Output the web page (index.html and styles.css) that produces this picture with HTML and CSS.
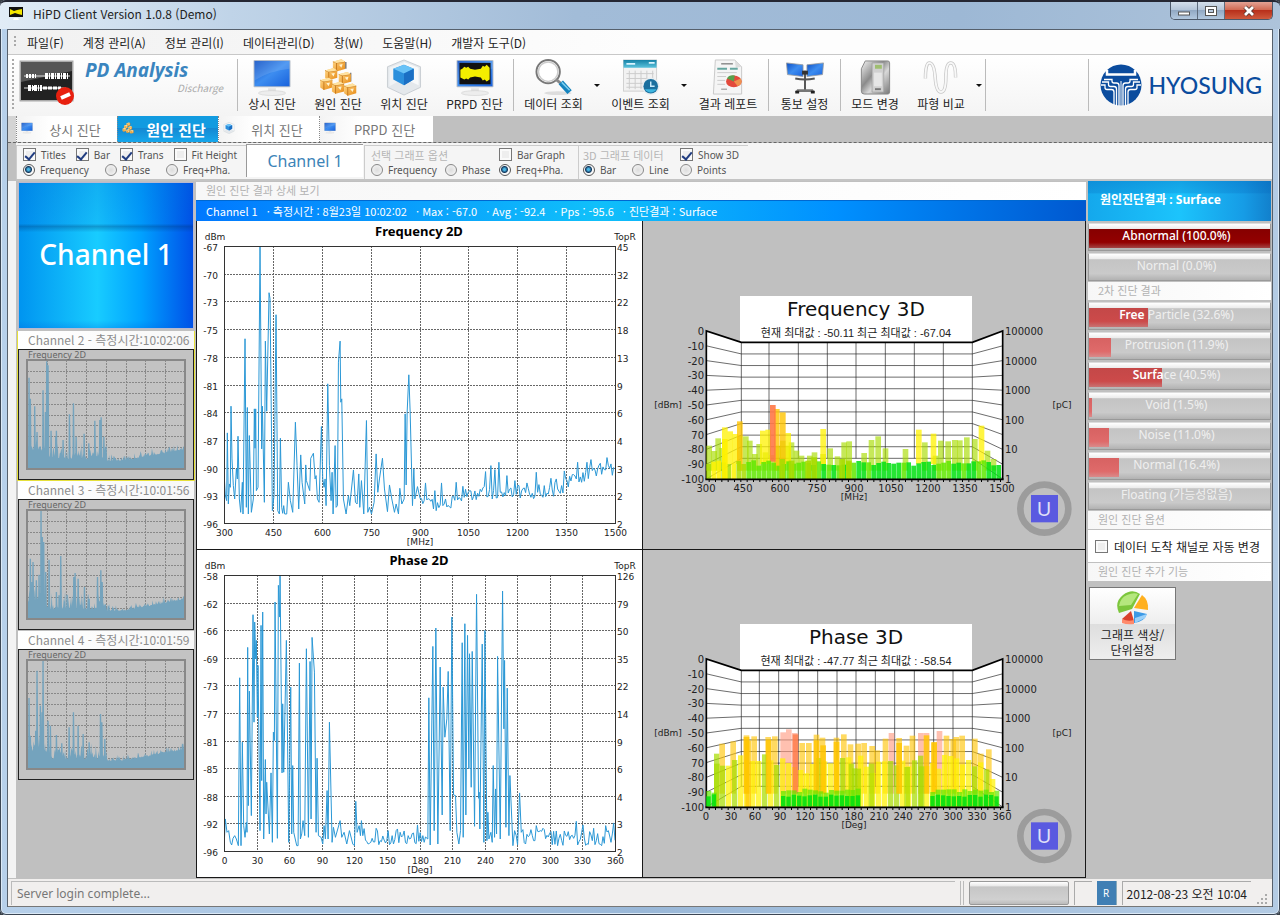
FILE: index.html
```html
<!DOCTYPE html>
<html lang="ko">
<head>
<meta charset="utf-8">
<title>HiPD Client Version 1.0.8 (Demo)</title>
<link rel="stylesheet" href="styles.css">
</head>
<body>
<svg class="defs" width="0" height="0" aria-hidden="true">
  <defs>
    <linearGradient id="gBlue" x1="0" y1="0" x2="1" y2="1"><stop offset="0" stop-color="#0d4fc4"/><stop offset=".5" stop-color="#3d8df0"/><stop offset="1" stop-color="#1a62dc"/></linearGradient>
    <linearGradient id="gSilver" x1="0" y1="0" x2="1" y2="1"><stop offset="0" stop-color="#f4f4f4"/><stop offset=".4" stop-color="#8b8b8b"/><stop offset=".6" stop-color="#d8d8d8"/><stop offset="1" stop-color="#777"/></linearGradient>
    <linearGradient id="gOrange" x1="0" y1="0" x2="1" y2="1"><stop offset="0" stop-color="#ffd98a"/><stop offset="1" stop-color="#e88a14"/></linearGradient>
    <linearGradient id="gTeal" x1="0" y1="0" x2="0" y2="1"><stop offset="0" stop-color="#1581a6"/><stop offset="1" stop-color="#5cc3dc"/></linearGradient>
    <symbol id="boxIcon" viewBox="0 0 12 12"><path d="M1 3 8 1l3 2v6l-7 2-3-2z" fill="url(#gOrange)"/><path d="M1 3l3 1 7-1M4 4v7" stroke="#b9670c" fill="none" stroke-width=".6"/><path d="M1 3 8 1l3 2-7 1z" fill="#ffe2a0"/><path d="M6 5.500l3-.5-1 3z" fill="#fff3d0"/></symbol>
    <symbol id="screenIcon" viewBox="0 0 40 38"><rect x="1" y="1" width="38" height="28" rx="1" fill="#b8bfc9"/><rect x="2" y="2" width="36" height="26" fill="url(#gBlue)"/><path d="M2 2h36v8Q18 12 2 22z" fill="#fff" opacity=".12"/><path d="M16 30h8v4h-8z" fill="#e3e3e3"/><ellipse cx="20" cy="35" rx="14" ry="2.500" fill="#ededed" stroke="#cfcfcf" stroke-width=".6"/></symbol>
    <symbol id="cubeIcon" viewBox="0 0 36 38"><path d="M18 1l17 7v21L18 37 1 29V8z" fill="#e4e8ec" stroke="#c9ced3"/><path d="M18 3l15 6v18L18 20z" fill="#f8f9fa"/><path d="M3 9l15-6v17L3 28z" fill="#f1f3f5"/><path d="M18 6l10 4v11l-10 6-11-6V10z" fill="#2b8fdc"/><path d="M18 6l10 4-10 5-11-5z" fill="#69c2f7"/><path d="M18 15l10-5v11l-10 6z" fill="#1b6fc4"/></symbol>
    <symbol id="boxesIcon" viewBox="0 0 40 38"><path d="M28 3v7M19 9l4 2M33 14v9" stroke="#777" stroke-width="1.500"/><use href="#boxIcon" x="13" y="-1" width="16" height="15"/><use href="#boxIcon" x="5" y="8" width="16" height="15"/><use href="#boxIcon" x="19" y="12" width="16" height="15"/><use href="#boxIcon" x="0" y="18" width="16" height="15"/><use href="#boxIcon" x="12" y="22" width="16" height="15"/><use href="#boxIcon" x="25" y="24" width="15" height="15"/></symbol>
  </defs>
</svg>

<div class="window">
  <header class="titlebar">
    <svg class="app-icon" viewBox="0 0 14 14"><rect width="14" height="10" fill="#111"/><path d="M1 2l4 2 3-1 5-1v6L9 7 6 6 1 8z" fill="#f3e600"/><path d="M5 11h4l1 2H4z" fill="#fff"/></svg>
    <h1 class="title">HiPD Client Version 1.0.8 (Demo)</h1>
    <div class="window-buttons">
      <button class="wbtn" aria-label="Minimize"><svg viewBox="0 0 14 12"><rect x="1.500" y="7" width="11" height="3" fill="#fff" stroke="#555"/></svg></button>
      <button class="wbtn" aria-label="Maximize"><svg viewBox="0 0 14 12"><rect x="1.500" y="1.500" width="11" height="9" fill="#fff" stroke="#555"/><rect x="4.500" y="4.500" width="5" height="3" fill="#b9cbe0" stroke="#555"/></svg></button>
      <button class="wbtn wbtn-close" aria-label="Close"><svg viewBox="0 0 14 12"><path d="M3 2l8 8M11 2l-8 8" stroke="#54352f" stroke-width="4.500"/><path d="M3 2l8 8M11 2l-8 8" stroke="#fff" stroke-width="2.800"/></svg></button>
    </div>
  </header>

  <div class="client">
    <nav class="menubar">
      <span class="grip"></span>
      <button>파일(F)</button><button>계정 관리(A)</button><button>정보 관리(I)</button><button>데이터관리(D)</button><button>창(W)</button><button>도움말(H)</button><button>개발자 도구(D)</button>
    </nav>

    <div class="toolbar">
      <span class="grip"></span>
      <div class="brand">
        <svg class="brand-icon" viewBox="0 0 56 46"><rect x=".5" y=".5" width="54" height="41" fill="#aaa"/><rect x="2" y="2" width="51" height="38" fill="#222"/><path d="M2 2h51v9L2 22z" fill="#555"/><path d="M5 16h46M5 28h42" stroke="#ddd"/><path d="M7 16h10M10 28h8" stroke="#fff" stroke-width="4" stroke-dasharray="2 1"/><path d="M26 16h24M9 28h14" stroke="#fff" stroke-width="6" stroke-dasharray="3 1 1 1"/><path d="M24 28h18" stroke="#fff" stroke-width="3" stroke-dasharray="4 1"/><circle cx="46" cy="36" r="9" fill="#e8200f"/><path d="M42 38l9-4" stroke="#fff" stroke-width="4"/></svg>
        <div class="brand-text"><strong>PD Analysis</strong><em>Discharge</em></div>
      </div>
      <span class="sep"></span>
      <button class="tool"><svg viewBox="0 0 40 38"><use href="#screenIcon"/></svg>상시 진단</button>
      <button class="tool"><svg viewBox="0 0 40 38"><use href="#boxesIcon"/></svg>원인 진단</button>
      <button class="tool"><svg viewBox="0 0 36 38"><use href="#cubeIcon"/></svg>위치 진단</button>
      <button class="tool tool-wide"><svg viewBox="0 0 40 38"><use href="#screenIcon"/><rect x="4" y="4" width="32" height="22" fill="#111"/><path d="M5 11l2-1 2-2 2 1 2-1 2 2 5 1 6-1 2-3 2 1 2-2 3 3v12l-3 2-2-2-2 1-2-3-6-1-5 1-2 2-2-1-2 1-4-2z" fill="#f4ee00"/></svg>PRPD 진단</button>
      <span class="sep"></span>
      <button class="tool tool-drop"><svg viewBox="0 0 40 38"><ellipse cx="24" cy="35" rx="14" ry="2" fill="#ddd"/><circle cx="14" cy="13" r="12" fill="#fff" stroke="#777" stroke-width="2"/><circle cx="14" cy="13" r="10" fill="none" stroke="#ccc" stroke-width="1.500"/><path d="M22 21l5 4" stroke="#888" stroke-width="3"/><path d="M27 24l9 10" stroke="#1583bd" stroke-width="6"/><path d="M28 24l8 8" stroke="#7fd0f0" stroke-width="1.500"/></svg>데이터 조회</button>
      <button class="arrow" aria-label="데이터 조회 메뉴"></button>
      <button class="tool tool-drop"><svg viewBox="0 0 40 38"><rect x="2" y="1" width="34" height="32" fill="#f2f2f2" stroke="#d0d0d0"/><rect x="2" y="1" width="34" height="8" fill="url(#gTeal)"/><path d="M5 5h9M28 4h6" stroke="#d9f4ff" stroke-width="2"/><path d="M5 15h28M5 20h28M5 25h28M5 29h20M8 12v19M14 12v19M20 12v19M26 12v10M32 12v10" stroke="#ccc"/><circle cx="30" cy="28" r="9" fill="#e8edf0"/><circle cx="30" cy="28" r="7.500" fill="#1b6f9e"/><path d="M30 23v5h4" stroke="#c7e9fa" stroke-width="1.500" fill="none"/><path d="M24 31a7 7 0 0 0 12 0z" fill="#3eb6e0"/></svg>이벤트 조회</button>
      <button class="arrow" aria-label="이벤트 조회 메뉴"></button>
      <button class="tool tool-report"><svg viewBox="0 0 40 38"><path d="M7 1h20l7 7v28H5z" fill="#f5f5f5" stroke="#c8c8c8"/><path d="M27 1l1 8 6-1z" fill="#ddd"/><path d="M13 5h12" stroke="#555"/><path d="M9 10h10M22 10h8" stroke="#66a6a0" stroke-width="2"/><path d="M9 14h20M9 18h9M9 22h8M9 26h8" stroke="#ccc"/><path d="M13 31h6" stroke="#888"/><ellipse cx="26" cy="23" rx="8" ry="6" fill="#e3493b"/><path d="M26 23l-7-3q2-4 8-3z" fill="#58a04c"/><path d="M26 23l7-3q3 5-3 8z" fill="#f0914e"/></svg>결과 레포트</button>
      <span class="sep"></span>
      <button class="tool tool-notify"><svg viewBox="0 0 40 38"><path d="M1 4l17 2v12L2 16z" fill="url(#gBlue)" stroke="#999" stroke-width=".8"/><path d="M39 4L22 6v12l16-2z" fill="url(#gBlue)" stroke="#999" stroke-width=".8"/><path d="M20 12v21M10 20q10 2 20 0" stroke="#555" stroke-width="2" fill="none"/><path d="M17 12h6v4h-6z" fill="#333"/><path d="M10 34h20l-2-3H12z" fill="#777"/><path d="M10 34h4M26 34h4" stroke="#222" stroke-width="3"/></svg>통보 설정</button>
      <span class="sep"></span>
      <button class="tool"><svg viewBox="0 0 40 38"><path d="M10 2h23q2 0 2 2v30q0 2-2 2H9q-3 0-3-3V10z" fill="url(#gSilver)" stroke="#888"/><path d="M17 4h12v30H17z" fill="#d0d0d0" stroke="#999" stroke-width=".7"/><rect x="19" y="14" width="8" height="14" fill="#e6e6e6"/><rect x="20" y="6" width="7" height="4" fill="#9fbe70"/><rect x="20" y="30" width="6" height="2" fill="#777"/></svg>모드 변경</button>
      <button class="tool"><svg viewBox="0 0 40 38"><path d="M4 20Q4 4 8 4q5 0 6 15t6 15 5-15 5-15 5 15" fill="none" stroke="#c6c6c6" stroke-width="3.500"/><path d="M4 20Q4 4 8 4q5 0 6 15t6 15 5-15 5-15 5 15" fill="none" stroke="#f8f8f8" stroke-width="2"/></svg>파형 비교</button>
      <button class="arrow" aria-label="파형 비교 메뉴"></button>
      <span class="sep"></span>
      <div class="company">
        <span class="sep"></span>
        <svg viewBox="0 0 42 42"><circle cx="21" cy="21" r="20.500" fill="#0b4c9e"/><g fill="none" stroke="#fff" stroke-width="1.300"><path d="M14 41V28q0-2.500-2.500-2.500H7q-2 0-2-2V21H1"/><path d="M16.500 42V25q0-2.500-2.500-2.500h-3.500q-2 0-2-2V18H2"/><path d="M19 42V21.500q0-2.500-2.500-2.500H14q-2 0-2-2v-1.500H4"/><path d="M28 41V28q0-2.500 2.500-2.500H35q2 0 2-2V21h4"/><path d="M25.500 42V25q0-2.500 2.500-2.500h3.500q2 0 2-2V18H40"/><path d="M23 42V21.500q0-2.500 2.500-2.500H28q2 0 2-2v-1.500h8"/><path d="M7 6v4.500h28V6" stroke-width="2.500"/><path d="M21 17v25" stroke-width="1"/></g></svg>
        <span class="company-name">HYOSUNG</span>
      </div>
    </div>

    <div class="tabs" role="tablist">
      <button class="tab" role="tab"><svg viewBox="0 0 40 38"><use href="#screenIcon"/></svg><span>상시 진단</span></button>
      <button class="tab tab-active" role="tab" aria-selected="true"><svg viewBox="0 0 40 38"><use href="#boxesIcon"/></svg><span>원인 진단</span></button>
      <button class="tab" role="tab"><svg viewBox="0 0 36 38"><use href="#cubeIcon"/></svg><span>위치 진단</span></button>
      <button class="tab tab-last" role="tab"><svg viewBox="0 0 40 38"><use href="#screenIcon"/></svg><span>PRPD 진단</span></button>
    </div>

    <div class="options">
      <fieldset class="group group-view">
        <div class="row">
          <label><input type="checkbox" checked>Titles</label>
          <label><input type="checkbox" checked>Bar</label>
          <label><input type="checkbox" checked>Trans</label>
          <label><input type="checkbox">Fit Height</label>
        </div>
        <div class="row">
          <label><input type="radio" name="view" checked>Frequency</label>
          <label><input type="radio" name="view">Phase</label>
          <label><input type="radio" name="view">Freq+Pha.</label>
        </div>
      </fieldset>
      <div class="channel-name">Channel 1</div>
      <fieldset class="group group-graph">
        <div class="row"><span class="group-title">선택 그래프 옵션</span><label class="col-c"><input type="checkbox">Bar Graph</label></div>
        <div class="row">
          <label class="col-a"><input type="radio" name="graph">Frequency</label>
          <label class="col-b"><input type="radio" name="graph">Phase</label>
          <label class="col-c"><input type="radio" name="graph" checked>Freq+Pha.</label>
        </div>
      </fieldset>
      <fieldset class="group group-3d">
        <div class="row"><span class="group-title">3D 그래프 데이터</span><label class="col-c"><input type="checkbox" checked>Show 3D</label></div>
        <div class="row">
          <label class="col-a"><input type="radio" name="style3d" checked>Bar</label>
          <label class="col-b"><input type="radio" name="style3d">Line</label>
          <label class="col-c"><input type="radio" name="style3d">Points</label>
        </div>
      </fieldset>
    </div>

    <main class="workspace">
      <aside class="channels">
        <button class="channel-current">Channel 1</button>
        <section class="channel-card channel-selected"><h2>Channel 2 - 측정시간:10:02:06</h2><svg class="thumb" data-channel="ch2" viewBox="0 0 174 129"></svg></section>
        <section class="channel-card"><h2>Channel 3 - 측정시간:10:01:56</h2><svg class="thumb" data-channel="ch3" viewBox="0 0 174 129"></svg></section>
        <section class="channel-card"><h2>Channel 4 - 측정시간:10:01:59</h2><svg class="thumb" data-channel="ch4" viewBox="0 0 174 129"></svg></section>
      </aside>

      <section class="detail">
        <h2 class="section-title">원인 진단 결과 상세 보기</h2>
        <div class="summary"><span>Channel 1</span><span>· 측정시간 : 8월23일 10:02:02</span><span>· Max : -67.0</span><span>· Avg : -92.4</span><span>· Pps : -95.6</span><span>· 진단결과 : Surface</span></div>
        <div class="charts">
          <svg class="chart2d" id="freq2d" viewBox="0 0 445 328"></svg>
          <svg class="chart3d" id="freq3d" viewBox="0 0 442 328"></svg>
          <svg class="chart2d" id="phase2d" viewBox="0 0 445 327"></svg>
          <svg class="chart3d" id="phase3d" viewBox="0 0 442 327"></svg>
        </div>
      </section>

      <aside class="results">
        <h2 class="verdict">원인진단결과 : Surface</h2>
        <div class="meter meter-alarm"><i style="width:100%"></i><span>Abnormal (100.0%)</span></div>
        <div class="meter"><span>Normal (0.0%)</span></div>
        <h3 class="section-title">2차 진단 결과</h3>
        <div class="meter meter-high"><i style="width:32.6%"></i><span><b>Free</b> Particle (32.6%)</span></div>
        <div class="meter"><i style="width:11.9%"></i><span>Protrusion (11.9%)</span></div>
        <div class="meter meter-high"><i style="width:40.5%"></i><span><b>Surfa</b>ce (40.5%)</span></div>
        <div class="meter"><i style="width:1.5%"></i><span>Void (1.5%)</span></div>
        <div class="meter"><i style="width:11%"></i><span>Noise (11.0%)</span></div>
        <div class="meter"><i style="width:16.4%"></i><span>Normal (16.4%)</span></div>
        <div class="meter"><span>Floating (가능성없음)</span></div>
        <h3 class="section-title">원인 진단 옵션</h3>
        <label class="auto"><input type="checkbox">데이터 도착 채널로 자동 변경</label>
        <h3 class="section-title">원인 진단 추가 기능</h3>
        <button class="color-button">
          <svg viewBox="0 0 34 34"><path d="M16 18L3 22Q-2 11 7 4t17-1z" fill="#7cc63c"/><path d="M15 14L3 15Q4 7 11 4t11-1z" fill="#b5e77e"/><path d="M18 17l8-13q7 5 6 15z" fill="#ffb01f"/><path d="M18 20l13 3q-3 8-13 9z" fill="#3d9ae6"/><path d="M19 27l12-4-2 4-10 5z" fill="#9bd1fa"/><path d="M15 20l3 10q-7 2-12-2z" fill="#d9412c"/><path d="M6 28q6 3 12 1v4q-7 1-12-1z" fill="#ff8a6b"/></svg>
          <span>그래프 색상/<br>단위설정</span>
        </button>
      </aside>
    </main>

    <footer class="statusbar">
      <span class="status-text">Server login complete...</span>
      <span class="status-sep"></span>
      <span class="status-progress"></span>
      <span class="status-box"></span>
      <span class="status-r">R</span>
      <time class="status-time">2012-08-23 오전 10:04</time>
      <svg class="size-grip" viewBox="0 0 12 12"><g fill="#aaa"><rect x="9" y="1" width="2" height="2"/><rect x="5" y="5" width="2" height="2"/><rect x="9" y="5" width="2" height="2"/><rect x="1" y="9" width="2" height="2"/><rect x="5" y="9" width="2" height="2"/><rect x="9" y="9" width="2" height="2"/></g></svg>
    </footer>
  </div>
</div>
<script src="charts.js"></script>
</body>
</html>
```
FILE: styles.css
```css
* { box-sizing: border-box; }
body { margin: 0; background: #3a4048; font-family: "Noto Sans", "Noto Sans CJK KR", sans-serif; font-size: 12px; color: #222; }
h1, h2, h3 { margin: 0; font-weight: 400; }
button { font: inherit; color: inherit; border: 0; padding: 0; background: none; }
.defs { position: absolute; }

.window { min-height: 100vh; display: flex; flex-direction: column; padding: 0 8px 8px; border-radius: 6px; box-shadow: inset 0 0 0 1px #3c4654, inset 0 0 0 2px #dbe9f6;
  background: linear-gradient(90deg, #b7d0ea, #9ab8d8 50%, #b3cbe4); }
.titlebar { display: flex; align-items: center; height: 29px; margin: 0 -8px; padding: 0 10px 4px 9px; border-radius: 6px 6px 0 0; border-top: 2px solid #252733;
  background: linear-gradient(90deg, #e1ecf6, #c0d4e8 18%, #a2bcd8 45%, #9db8d5 75%, #adc3da); }
.app-icon { width: 14px; height: 14px; }
.title { margin-left: 10px; font-size: 12px; flex: 1; font-family: "Noto Sans CJK KR", sans-serif; }
.window-buttons { display: flex; align-self: flex-start; border: 1px solid #4c5869; border-top: 0; border-radius: 0 0 5px 5px; overflow: hidden; margin-right: -3px; }
.wbtn { width: 27px; height: 17px; display: grid; place-items: center; border-right: 1px solid #5d6b7d; background: linear-gradient(#d4dfeb, #b4c5d8 45%, #92a9c4 50%, #b2c8df); }
.wbtn svg { width: 14px; height: 12px; }
.wbtn-close { width: 47px; border-right: 0; background: linear-gradient(#e3a294, #d16a54 45%, #b8301b 50%, #cf5a3d); }

.client { flex: 1; display: flex; flex-direction: column; background: #c0c0c0; border: 1px solid #56606c; border-width: 1px 1px 0 1px; margin: 0 -1px; }
.menubar { display: flex; align-items: center; height: 25px; background: linear-gradient(90deg, #f1f1f1, #fdfdfd 50%); border-bottom: 1px solid #c8c8c8; padding-left: 6px; gap: 19px; font-family: "Noto Sans CJK KR", sans-serif; }
.menubar .grip { height: 12px; margin-right: -8px; }
.grip { width: 2px; background: repeating-linear-gradient(#aaa 0 2px, transparent 2px 4px); }

.toolbar { display: flex; align-items: flex-start; height: 61px; padding: 4px 4px 0; background: linear-gradient(#fff, #f4f4f4); font-family: "Noto Sans CJK KR", sans-serif; }
.toolbar > .grip { height: 50px; margin-right: 5px; }
.brand { display: flex; width: 217px; gap: 10px; }
.brand-icon { width: 56px; height: 46px; margin-top: 1px; }
.brand-text { display: flex; flex-direction: column; width: 138px; }
.brand-text strong { font: italic 700 19px/22px "Noto Sans", sans-serif; color: #3a85bf; }
.brand-text em { font-size: 10px; line-height: 14px; color: #aaa; align-self: flex-end; }
.sep { width: 1px; height: 52px; background: #bbb; margin: 0 1px; }
.tool { width: 66px; display: flex; flex-direction: column; align-items: center; line-height: 16px; white-space: nowrap; }
.tool svg { width: 40px; height: 37px; }
.tool-wide { width: 75px; }
.tool-drop { width: 77px; }
.tool-report { width: 78px; }
.tool-notify { width: 69px; }
.arrow { width: 10px; height: 52px; }
.arrow::before { content: ""; display: block; margin: 0 2px; border: 3px solid transparent; border-top-color: #111; border-bottom: 0; }
.company { margin-left: auto; display: flex; gap: 10px; padding-right: 6px; }
.company svg { width: 42px; height: 42px; margin-top: 5px; }
.company-name { font: 500 23px/52px Lato, sans-serif; color: #0b4c9e; margin-left: -4px; }

.tabs { display: flex; height: 27px; padding-left: 8px; border-bottom: 1px dashed #666; box-shadow: inset 8px 0 0 #d4d4d4; }
.tab { display: flex; align-items: center; width: 101px; padding: 0 4px; background: linear-gradient(90deg, #f3f3f3, #fff 35%); color: #777; font: 13px "Noto Sans CJK KR", sans-serif; border: 1px dotted #888; border-width: 0 0 0 1px; }
.tab svg { width: 12px; height: 12px; align-self: flex-start; margin-top: 6px; }
.tab span { flex: 1; text-align: center; padding-left: 4px; }
.tab-last { width: 114px; }
.tab-active { background: linear-gradient(#129be0 45%, #1588d2 47%, #16a7ec); color: #fff; font-size: 15px; font-weight: 700; }

.options { display: flex; height: 38px; margin-left: 8px; background: #f5f5f5; border-bottom: 2px solid #c4c4c4; }
.group { margin: 2px 0 0; padding: 1px 4px 1px 6px; border: 1px solid #ccc; border-width: 1px 0 0 1px; min-width: 0; }
.row { display: flex; height: 15px; align-items: center; }
.row label { display: flex; align-items: center; gap: 5px; font-size: 10px; color: #555; white-space: nowrap; }
.group-view { width: 230px; }
.group-view .row { gap: 10px; }
.group-view .row + .row { gap: 16px; }
.group-title { flex: 1; color: #b5b5b5; font: 11px/14px "Noto Sans CJK KR", sans-serif; white-space: nowrap; }
.col-b { flex: 1; }
.group-graph { width: 214px; }
.group-graph .col-a { width: 74px; }
.group-graph .col-c { width: 75px; }
.group-3d { width: 170px; padding-left: 4px; }
.group-3d .col-a { width: 49px; }
.group-3d .col-c { width: 64px; }
.channel-name { width: 117px; margin: 1px 1px 2px 0; border: 1px solid #999; border-width: 1px 0 0 1px; background: #fff; color: #3c84b8; font-size: 16px; line-height: 32px; text-align: center; }
input { appearance: none; margin: 0; width: 13px; height: 13px; flex: none; }
input[type=checkbox] { border: 1px solid #777; background: #eee; box-shadow: inset 0 0 0 2px #fafafa; display: grid; place-items: center; }
input[type=checkbox]:checked::before { content: ""; width: 4px; height: 8px; border: solid #203c80; border-width: 0 2px 2px 0; transform: rotate(40deg); }
input[type=radio] { width: 12px; height: 12px; border: 1px solid #888; border-radius: 50%; background: radial-gradient(#ddd, #f8f8f8); }
input[type=radio]:checked { background: radial-gradient(circle at 45% 45%, #4bb7e6 0 1px, #14395f 3px, #f8f8f8 4px); border-color: #555; }

.workspace { flex: 1; display: grid; grid-template-columns: 180px minmax(0, 1fr) 186px; margin-left: 8px; box-shadow: -8px 0 0 #f3f3f3; }
.channels { padding: 1px 2px; }
.channel-current { display: block; width: 100%; height: 147px; padding-bottom: 4px; border: 1px solid #b9b9d0; color: #fff; font-size: 28px; font-weight: 500;
  background: linear-gradient(#0050d040 0, #0060d040 2%, #0050d020 28%, #00307055 30%, transparent 34%, transparent 95%, #0060e040), linear-gradient(90deg, #0094f0, #18ccff 45%, #00a2ff 70%, #0050e8); }
.channel-card { margin: 1px -1px 0; border: 1px solid transparent; border-width: 0 1px; }
.channel-current + .channel-card { margin-top: 2px; }
.channel-card h2 { height: 18px; padding-left: 10px; line-height: 18px; color: #8d8d8d; background: linear-gradient(90deg, #fff, #f7f7f7); font: 12px/18px "Noto Sans CJK KR", sans-serif; white-space: nowrap; }
.thumb { display: block; width: 100%; border: 1px solid #222; background: #c3c3c3; }
.channel-selected { border-color: #e6e03a; box-shadow: 0 1px #e6e03a; }
.thumb text { font: 9px "Noto Sans", sans-serif; fill: #666; }
.thumb .area { fill: #74a3bd; }
.thumb .grid { stroke: #888; stroke-dasharray: 2 1; }
.frame { fill: none; stroke: #333; }
.thumb .frame { stroke: #888; stroke-width: 2; }

.section-title { height: 18px; margin-top: 1px; padding-left: 10px; color: #b2b2b2; background: linear-gradient(90deg, #f7f7f7, #fff); font: 11px/17px "Noto Sans CJK KR", sans-serif; }
.detail { display: flex; flex-direction: column; }
.summary { display: flex; gap: 9px; align-items: center; height: 21px; padding-left: 10px; color: #fff; font: 11px/20px "Noto Sans CJK KR", sans-serif; white-space: nowrap; border-top: 1px solid #0068d0; background: linear-gradient(90deg, #0078ff, #10c0fa 45%, #0090ff 72%, #0058d0); }
.charts { flex: 1; display: grid; grid-template-columns: 445fr 442fr; gap: 1px; padding: 0 1px 1px; background: #181818; }
.charts > svg { display: block; width: 100%; height: 100%; }
.chart2d { background: #fff; }
.chart3d { background: #c0c0c0; }
.chart2d text { font: 9px "DejaVu Sans", sans-serif; fill: #222; }
.chart2d .heading { font: 700 13px "Noto Sans", sans-serif; fill: #000; }
.chart2d .grid { stroke: #666; stroke-dasharray: 2 1; }
.chart2d .trace { fill: none; stroke: #2b98d6; stroke-width: 1; vector-effect: non-scaling-stroke; stroke-linejoin: bevel; }
.chart3d text { font: 10px "DejaVu Sans", sans-serif; fill: #222; }
.chart3d .heading { font-size: 20px; fill: #111; }
.chart3d .unit { font-size: 9px; }
.chart3d .caption { font: 11px "Liberation Sans", "Noto Sans CJK KR", sans-serif; }
.chart3d .wall { fill: #fff; }
.chart3d .mesh { fill: none; stroke: #222; stroke-width: 2; }
.chart3d .mesh-bold { fill: none; stroke: #000; stroke-width: 5; }
.chart3d .logo-text { font: 20px "Noto Sans", sans-serif; fill: #e0e0f8; }

.results { padding: 0 1px 0 2px; }
.verdict { height: 40px; padding-left: 12px; color: #fff; font: 700 12px/38px "Noto Sans", "Noto Sans CJK KR", sans-serif; background: linear-gradient(#0058b050, #0058b030 30%, transparent 32%), linear-gradient(90deg, #14a8ec, #1cc4fc 50%, #169ce6 85%, #1280cc); }
.meter { position: relative; height: 28px; margin-top: 2px; padding-right: 6px; border: 1px solid #999; border-top-color: #ddd; background: linear-gradient(#fff, #ececec 18%, #c4c4c4 22%, #cacaca 75%, #b2b2b2); text-align: center; color: #efefef; font-size: 12px; line-height: 24px; }
.meter i { position: absolute; left: 0; top: 5px; bottom: 2px; background: linear-gradient(#d76262, #df6a6a 70%, #d98a8a); }
.meter span { position: relative; }
.meter b { font-weight: 600; color: #fff; }
.meter-high i { background: linear-gradient(#c44848, #cc4a4a 70%, #c87272); }
.meter-alarm { color: #fff; font-weight: 500; }
.meter-alarm i { background: linear-gradient(#860000, #930000 70%, #a34444); }
.meter + .section-title { margin-top: 1px; }
.section-title + .meter { margin-top: 2px; }
.auto { display: flex; align-items: center; gap: 6px; height: 32px; margin-top: 1px; padding-left: 7px; background: #fff; font-family: "Noto Sans CJK KR", sans-serif; white-space: nowrap; }
.color-button { display: flex; flex-direction: column; align-items: center; gap: 2px; width: 87px; margin: 6px 0 0 1px; padding: 3px 0 2px; border: 1px solid #777; background: linear-gradient(#fff, #eee 50%, #dedede 51%, #eee); font: 12px/15px "Noto Sans CJK KR", sans-serif; }
.color-button svg { width: 34px; height: 34px; }

.statusbar { display: flex; align-items: center; height: 28px; margin-top: 1px; padding: 2px 4px 1px 3px; gap: 5px; background: #f1efee; border-bottom: 1px solid #777; }
.status-text { flex: 1; align-self: stretch; padding-left: 5px; color: #777; line-height: 23px; border: 1px solid #bbb; border-width: 1px 0 0 1px; }
.status-sep { width: 4px; height: 24px; border: 1px solid #bbb; border-width: 0 1px; }
.status-progress { width: 100px; height: 24px; border: 1px solid #999; border-radius: 2px; background: linear-gradient(#fff, #e8e8e8 18%, #c6c6c6 22%, #d0d0d0 80%, #bbb); }
.status-box { width: 18px; height: 24px; border: 1px solid #aaa; border-width: 1px 0 0 1px; }
.status-r { width: 20px; height: 24px; background: #407fb4; border-right: 1px solid #8ab; color: #fff; font-size: 10px; line-height: 24px; text-align: center; }
.status-time { height: 24px; padding: 0 4px; border: 1px solid #aaa; border-width: 1px 0 0 1px; font: 12px/23px "Noto Sans CJK KR", sans-serif; }
.size-grip { width: 12px; height: 12px; align-self: flex-end; }
```
FILE: charts.js
```javascript
// Small fixed-seed generator, so the noise floor is the same on every load.
function generator(seed) {
  let s = seed;
  return () => (s = (s * 16807) % 2147483647) / 2147483647;
}

const parse = text => text.trim().split(/\s+/).map(p => p.split(',').map(Number));

// Baseline between the listed knots, jittered, with named spikes put on top.
function floorTrace(knots, spikes, seed, jitter) {
  const rnd = generator(seed);
  const out = [];
  const top = new Map(spikes.map(([x, y]) => [Math.round(x / 4) * 4, y]));
  for (let x = Math.ceil(knots[0][0] / 4) * 4; x <= knots[knots.length - 1][0]; x += 4) {
    let k = 1;
    while (k < knots.length - 1 && knots[k][0] < x) k++;
    const [x0, y0] = knots[k - 1], [x1, y1] = knots[k];
    const base = y0 + (y1 - y0) * (x - x0) / (x1 - x0);
    out.push([x, top.has(x) ? top.get(x) : Math.round(base + (rnd() - 0.55) * jitter)]);
  }
  return out;
}

const freqTrace = [
  ...parse(`84,880 88,950 92,965 94,762 97,975 100,915 103,925 105,682 108,840 112,920 116,960 121,870 124,900 126,772
  130,960 134,1000 139,910 141,1005 147,480 151,985 154,686 157,1005 160,770 166,1000 172,960 175,690 177,808 179,690
  181,935 186,925 192,202 197,810 199,682 205,970 208,487 212,697 219,342 222,360 229,995 234,950 240,408 245,995
  250,1005 253,778 257,985 260,1003 263,980 266,1005 272,1005 277,910 283,965 290,1000 298,730 303,860 308,990 314,828
  318,910 326,975 329,858 331,905 341,935 344,838 352,823 357,900 360,890 364,960 369,970 376,743 380,900 384,925
  387,900 390,980 395,615 400,860 405,965 408,880 411,1005 417,800 420,985 424,980 427,550 432,487 434,670 437,660 442,960 450,1005 457,950
  461,980 472,873 478,970 483,975 488,885 491,985 496,905 503,1005 511,725 515,1000 520,985 526,1005 534,970 540,825
  545,940 550,900 559,838 565,930 574,998 580,918 587,960 595,1000 600,975 607,1005 611,928 617,975 624,960 627,705 630,918
  633,700 638,588 642,700 649,980 653,870 656,960`),
  ...floorTrace([[661, 945], [695, 975], [740, 975], [770, 975], [800, 952], [860, 940], [950, 942], [1060, 938], [1110, 920], [1140, 895], [1200, 880], [1252, 872]],
    parse('686,912 716,935 735,912 781,910 800,922 867,878 885,860 894,872 908,850 931,890 955,905 992,912 1018,880 1064,898 1079,900 1102,876 1144,850 1172,850 1185,842 1213,853 1232,836 1244,855'), 71, 45),
];

const phaseTrace = [
  ...parse(`84,900 88,810 93,850 98,845 103,880 107,888 111,868 116,860 121,870 127,890 131,387 135,890 139,580 143,830
  147,865 151,820 153,850 155,296 157,770 160,427 166,800 171,198 174,520 176,220 179,330 181,275 184,505 186,350
  192,845 195,230 197,695 200,190 203,870 208,632 210,795 212,700 220,855 225,672 229,880 232,550 235,575 237,160
  244,868 247,110 251,205 252,79 258,672 260,465 263,670 271,275 278,880 284,415 287,855 290,650 293,850 302,890
  306,890 310,343 313,870 317,855 321,815 326,860 331,300 337,865 342,338 345,810 348,266 355,370 360,850 363,628
  367,860 375,865 380,885 384,830 388,870 393,725 396,870 400,520 408,880 412,835 418,865 432,815 437,865 444,850
  452,885 460,845 470,885 475,890 479,757 483,850 489,830 493,860 496,815 500,860`),
  ...floorTrace([[504, 865], [690, 868]], parse('540,838 664,828'), 13, 48),
  ...parse(`695,870 698,447 702,888 710,293 714,845 719,238 725,885 732,355 738,798 741,415 746,565 752,510 756,368
  762,845 767,205 772,738 778,740 782,850 788,885 793,845 798,282 801,865 806,225 809,798 814,260 818,660 820,315
  825,715 828,308 835,832 841,137 847,748 849,730 851,840 858,286 863,880 866,245 872,875 875,790 878,870 884,850
  888,880 891,650 895,865 898,720 901,855 904,323 912,870 919,127 923,540 925,335 929,835 933,418 938,860 941,680
  950,890 955,845 960,860 964,888 970,732 975,850`),
  ...floorTrace([[980, 868], [1256, 870]], parse('1004,842 1018,830 1040,838 1141,817 1159,828 1192,838 1226,830 1252,822'), 29, 48),
];

const label = (x, y, text, anchor = 'middle', cls = '') =>
  `<text x="${x}" y="${y}" text-anchor="${anchor}" class="${cls}">${text}</text>`;

function chart2d(id, o) {
  const L = 27, R = 418, T = 25, B = o.base;
  let s = label(222, 15, o.title, 'middle', 'heading') + label(18, 19, 'dBm') + label(428, 19, 'TopR');
  o.left.forEach((v, i) => {
    const y = Math.round(T + (B - T) * i / (o.left.length - 1)) + 0.5;
    s += `<path class="grid" d="M${L} ${y}H${R}"/>` + label(21, y + 4, v, 'end') + label(420, y + 4, o.right[i], 'start');
  });
  o.bottom.forEach((v, i) => {
    const x = Math.round(L + (R - L) * i / (o.bottom.length - 1)) + 0.5;
    s += `<path class="grid" d="M${x} ${T}V${B}"/>` + label(x, B + 13, v);
  });
  s += label(223, B + 22, o.unit);
  s += `<svg x="${L}" y="${T}" width="${R - L}" height="${B - T}" viewBox="${o.box}" preserveAspectRatio="none"><polyline class="trace" points="${o.trace.join(' ')}"/></svg>`;
  s += `<rect class="frame" x="${L + 0.5}" y="${T + 0.5}" width="${R - L}" height="${B - T}"/>`;
  document.getElementById(id).innerHTML = s;
}

chart2d('freq2d', { title: 'Frequency 2D', unit: '[MHz]', trace: freqTrace, box: '84 202 1172 830', base: 302,
  left: [-67, -70, -73, -75, -78, -81, -84, -87, -90, -93, -96], right: [45, 32, 22, 18, 13, 9, 6, 4, 3, 2, 2],
  bottom: [300, 450, 600, 750, 900, 1050, 1200, 1350, 1500] });
chart2d('phase2d', { title: 'Phase 2D', unit: '[Deg]', trace: phaseTrace, box: '84 79 1172 827', base: 301,
  left: [-58, -62, -66, -69, -73, -77, -81, -85, -88, -92, -96], right: [126, 79, 50, 35, 22, 14, 9, 6, 4, 3, 2],
  bottom: [0, 30, 60, 90, 120, 150, 180, 210, 240, 270, 300, 330, 360] });

const TONE = { s: '#ff7846', p: '#ff9a80', o: '#ffc400', y: '#fff200', l: '#a8dc00', g: '#5fe800', G: '#00e010' };
const bar = (x, top, tone, bottom = 600, w = 17, alpha = 0.7) =>
  `<rect x="${x}" y="${top}" width="${w}" height="${bottom - top}" fill="${TONE[tone]}" fill-opacity="${alpha}"/>`;
const bars = (text, bottom, alpha) => text.trim().split(/\s+/).map(t => {
  const [, x, tone, top] = t.match(/^(\d+)([a-zA-Z])(\d+)$/);
  return bar(+x, +top, tone, bottom, 17, alpha);
}).join('');

function freqBars() {
  const rnd = generator(5);
  let s = bars(`193l500 208l516 220l478 232l507 285l470 303l472 315l485 330l525 343l495 362l520 381l528 400l500 414l485 430l500
   440l490 455l515 470l530 495l530 509l520 535l525 556l508 578l532 598l490 613l487 658l522 680l483 700l472 722l508 782l510
   840l490 872l530 888l485 910l487 930l483 945l484 966l475 990l480 1028l515 1046l540`, 575, 0.65);
  s += bars('240y445 256y457 272y465 354y455 370y452 430y462 535y450 822y452 866y464 1010y440', 555, 0.75);
  s += bars('285o427 396o390 414o400', 575, 0.8) + bars('384s378', 548, 0.9);
  for (let x = 193; x < 1075; x += 15) {
    const tone = x < 310 ? (rnd() > 0.5 ? 'y' : 'l') : x < 480 ? 'g' : rnd() > 0.35 ? 'G' : 'g';
    s += bar(x, Math.round(543 + rnd() * 18), tone, 600, 14, 0.85);
  }
  return s + bars('490l545 508l535 592l540 612l545 240y480 412l540 440l545', 600, 0.9);
}

function phaseBars() {
  const rnd = generator(9);
  let s = '';
  const back = `232o410 265o403 305o385 328o388 370o390 390o388 415p376 432p367 450p378 472o408 492o408 515o383 533o392
   575o392 597o382 617o412 640o410 658o408 682o417 697o430 722o395 740p378 763o393 785o416 803o386 828p378 845p378
   868o408 884p372 905o386 925o396 934o390 952o386 990o395 1008o440 1032o427`;
  s += bars(back, 560, 0.62);
  for (let x = 216; x < 1060; x += 18) {
    const high = x < 440 || (x > 690 && x < 1010);
    const tall = high || rnd() > 0.45;
    s += bar(x, Math.round((tall ? 440 : 480) + rnd() * 45), rnd() > 0.25 ? 'y' : 'l', 600, 16, 0.72);
  }
  s += bars('305o390 372o398 452s382 515o400 535o415 575o405 763o408 845o385 868o405', 560, 0.8);
  s += bars('216l470 310o400 620l470 640l485 680l470 787l480 830l478', 600, 0.7);
  for (let x = 193; x < 1065; x += 16) {
    if (x > 216 && x < 415 || x > 655 && x < 850) continue;
    s += bar(x, Math.round(545 + rnd() * 12), 'g', 600, 15, 0.7) + bar(x, Math.round(562 + rnd() * 8), 'G', 598, 13, 0.85);
  }
  return s;
}

function chart3d(id, o) {
  const dy = o.top;
  let mesh = '';
  o.columns.forEach(x => { mesh += `M${x} 190V538`; });
  for (let i = 1; i <= 10; i++) {
    const back = 190 + 34.8 * i, front = 156 + 44.4 * i;
    mesh += `M193 ${front}L298 ${back}H991L1082 ${front}`;
  }
  let s = `<rect class="wall" x="97" y="${dy + 17 - o.lift}" width="232" height="48"/>`;
  s += `<svg x="-1" y="${dy - o.lift}" width="446" height="270" viewBox="0 0 1338 810">
    <path class="wall" d="M193 156L298 190H991L1082 156V600H193z"/><path class="mesh" d="${mesh}M298 190V538M991 190V538"/>
    <path class="mesh-bold" d="M193 600V156L298 190H991L1082 156V600"/>${o.bars}
    <path class="mesh-bold" d="M190 601H1085"/><path d="M200 606H1080" stroke="#000" stroke-width="6" stroke-dasharray="3 16"/>
    <circle cx="1207" cy="${o.logoY}" r="72" fill="none" stroke="#9c9c9c" stroke-width="20"/><rect x="1167" y="${o.logoY - 41}" width="81" height="82" fill="#5a5ae0"/></svg>`;
  const y0 = dy - o.lift;
  s += label(213, y0 + 37, o.title, 'middle', 'heading') + label(213, y0 + 58, o.caption, 'middle', 'caption');
  [0, -10, -20, -30, -40, -50, -60, 70, -80, -90, -100].forEach((v, i) => {
    s += label(61, Math.round(y0 + 56 + 14.8 * i), v, 'end');
  });
  ['100000', '10000', '1000', '100', '10', '1'].forEach((v, i) => {
    s += label(362, Math.round(y0 + 56 + 29.6 * i), v, 'start');
  });
  o.bottom.forEach((v, i) => { s += label(Math.round(63 + 296 * i / (o.bottom.length - 1)), y0 + 213, v); });
  s += label(211, y0 + 221, o.unit, 'middle', 'unit') + label(25, y0 + 129, '[dBm]', 'middle', 'unit') + label(419, y0 + 129, '[pC]', 'middle', 'unit');
  s += label(401, y0 + Math.round(o.logoY / 3) + 7, 'U', 'middle', 'logo-text');
  document.getElementById(id).innerHTML = s;
}

chart3d('freq3d', { title: 'Frequency 3D', caption: '현재 최대값 : -50.11 최근 최대값 : -67.04', unit: '[MHz]', top: 58, lift: 0, logoY: 689,
  columns: [381, 469, 556, 642, 730, 817, 904], bottom: [300, 450, 600, 750, 900, 1050, 1200, 1350, 1500], bars: freqBars() });
chart3d('phase3d', { title: 'Phase 3D', caption: '현재 최대값 : -47.77 최근 최대값 : -58.54', unit: '[Deg]', top: 59, lift: 2, logoY: 687,
  columns: [352, 410, 527, 469, 585, 642, 700, 758, 817, 875, 933], bottom: [0, 30, 60, 90, 120, 150, 180, 210, 240, 270, 300, 330, 360], bars: phaseBars() });

// Peaks as [x, distance from the top] inside a 473 by 327 plot.
const channels = {
  ch2: '6,53 10,116 23,139 30,216 48,91 55,156 59,4 63,16 72,212 86,230 88,212 108,240 127,163 139,130 147,230 171,221 185,250 203,182 218,180 222,172 230,230',
  ch3: '10,146 15,216 18,156 28,211 36,194 42,2 46,81 50,96 56,186 66,149 88,246 96,256 101,138 120,254 140,201 144,189 153,206 172,231 186,266 211,201 221,181 225,216',
  ch4: '6,114 10,227 26,212 30,32 40,137 45,157 48,2 63,182 70,197 88,225 104,250 126,202 139,157 153,197 168,222 186,247 220,162 224,187 233,237',
};
document.querySelectorAll('.thumb').forEach((el, n) => {
  const rnd = generator(31 + n);
  let s = '';
  for (let i = 1; i < 10; i++) s += `<path class="grid" d="M8 ${Math.round(10 + 10.9 * i) + 0.5}H166"/>`;
  for (let i = 1; i < 8; i++) s += `<path class="grid" d="M${Math.round(8 + 19.7 * i) + 0.5} 10V119"/>`;
  let d = 'M0 327';
  for (let x = 0; x < 473; x += 2) {
    const base = x < 60 ? 275 : x < 240 ? 298 : x < 290 ? 303 : 303 - (x - 290) * 0.19;
    const jitter = x < 240 ? 60 : 24;
    d += `L${x} ${Math.round(base - rnd() * rnd() * jitter)}`;
  }
  d += 'L473 327z';
  parse(channels[el.dataset.channel]).forEach(([x, y]) => { d += `M${x - 3} 327L${x - 2} ${y}H${x + 2}L${x + 4} 327z`; });
  s += `<svg x="8" y="10" width="158" height="109" viewBox="0 0 473 327" preserveAspectRatio="none"><path class="area" d="${d}"/></svg>`;
  s += '<rect class="frame" x="8" y="10" width="158" height="109"/>' + label(9, 8, 'Frequency 2D', 'start');
  el.innerHTML = s;
});
```
